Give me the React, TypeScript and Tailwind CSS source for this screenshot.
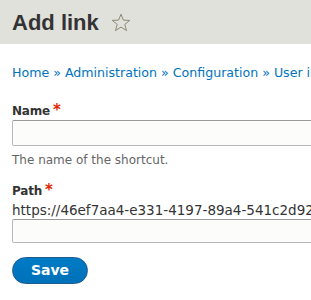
import React from 'react';

const font = { fontFamily: '"DejaVu Sans", Verdana, sans-serif' };
const titleFont = { fontFamily: '"Liberation Sans", Arial, sans-serif' };

const Star = () => (
  <svg width="20" height="19" viewBox="0 0 20 19" className="ml-[12px] mt-[1px]">
    <path
      d="M10 1.2 L12.4 7.1 L18.7 7.4 L13.8 11.4 L15.5 17.6 L10 14.1 L4.5 17.6 L6.2 11.4 L1.3 7.4 L7.6 7.1 Z"
      fill="none"
      stroke="#8a8a78"
      strokeWidth="1"
      strokeLinejoin="round"
    />
  </svg>
);

const Required = () => <span className="text-[#e62600] ml-[3px] text-[15px] leading-none">*</span>;

const App: React.FC = () => {
  return (
    <div className="w-[311px] h-[300px] overflow-hidden bg-white text-[#333]" style={font}>
      <div className="h-[44px] bg-[#e1e1db] flex items-center pl-3">
        <h1 className="text-[22px] font-bold text-[#333] leading-none mt-[2px]" style={titleFont}>
          Add link
        </h1>
        <Star />
      </div>

      <div className="px-3 pt-[20px] whitespace-nowrap text-[12.6px] text-[#0074bd]">
        Home » Administration » Configuration » User interface
      </div>

      <form className="px-3 pt-[19px] w-[500px]">
        <label className="flex items-center text-[12px] font-bold text-[#333] h-[18px] tracking-[-0.2px]">
          Name <Required />
        </label>
        <input className="block w-full h-[26px] bg-[#fcfcfa] border border-[#b8b8b8] border-t-[#999] rounded-[2px] outline-none" />
        <div className="text-[12px] text-[#666] mt-[5px]">The name of the shortcut.</div>

        <label className="mt-[13px] flex items-center text-[12px] font-bold text-[#333] h-[18px] tracking-[-0.2px]">
          Path <Required />
        </label>
        <div className="text-[13.5px] text-[#333] mt-[2px] whitespace-nowrap leading-[17px]">
          https://46ef7aa4-e331-4197-89a4-541c2d92a1b5
        </div>
        <input className="block w-full h-[24px] bg-[#fcfcfa] border border-[#b8b8b8] border-t-[#999] rounded-[2px] outline-none" />

        <button
          type="button"
          className="mt-[14px] w-[76px] h-[27px] rounded-full bg-gradient-to-b from-[#007bc6] to-[#0071b8] border border-[#1e5c90] text-white text-[14px] font-bold"
        >
          Save
        </button>
      </form>
    </div>
  );
};

export default App;
